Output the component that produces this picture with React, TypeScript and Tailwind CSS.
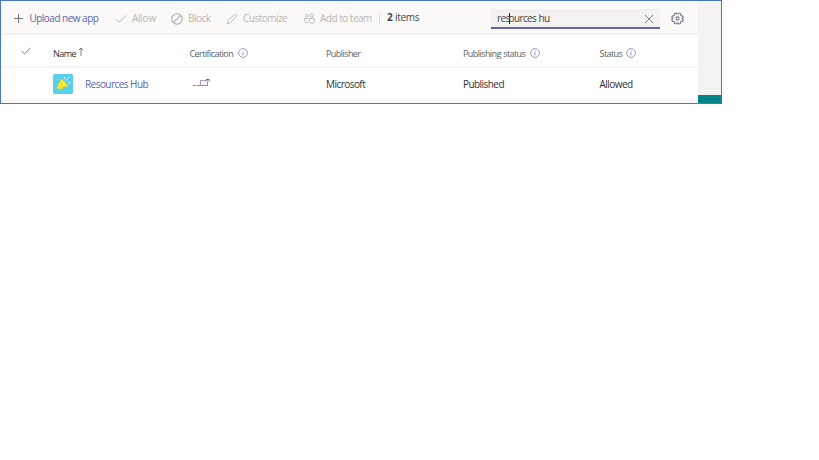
import type { ReactNode } from 'react';

function Check({ className }: { className: string }) {
  return (
    <svg viewBox="0 0 12 10" className={className} fill="none" stroke="currentColor" strokeWidth="1">
      <path d="M0.7 5.2 4 8.4 11.3 1.2" />
    </svg>
  );
}

function Info({ className = '' }: { className?: string }) {
  return (
    <svg viewBox="0 0 10 10" className={`mb-[2px] h-[10px] w-[10px] shrink-0 text-[#8d8fc4] ${className}`} fill="none" stroke="currentColor">
      <circle cx="5" cy="5" r="4.4" strokeWidth="0.9" />
      <path d="M5 4.4v3M5 2.6v0.9" strokeWidth="1" />
    </svg>
  );
}

function Action({ width, active, icon, label }: { width: string; active?: boolean; icon: ReactNode; label: ReactNode }) {
  return (
    <button className={`flex h-full shrink-0 items-center ${width} ${active ? 'text-[#6264a7]' : 'text-[#b8b6b4]'}`}>
      {icon}
      {label}
    </button>
  );
}

function Header({ width, info, children }: { width: string; info?: ReactNode; children: ReactNode }) {
  return (
    <div className={`flex shrink-0 items-center gap-[5px] text-[9px] tracking-[-0.56px] [word-spacing:0.5px] text-[#605e5c] ${width}`}>
      <span>{children}</span>
      {info}
    </div>
  );
}

export default function App() {
  return (
    <div className="h-[460px] w-[819px] overflow-hidden bg-white font-['Open_Sans','Noto_Sans',sans-serif] whitespace-nowrap">
      <div className="flex h-[104px] w-[722px] border border-[#4677b8] bg-white">
        <main className="w-[697px] shrink-0">
          <div className="flex h-[34px] items-center border-b-2 border-[#f0efed] bg-[#faf9f8] pt-[3px] pl-[13px] text-[10px] tracking-[-0.52px] [word-spacing:0.5px]">
            <Action
              width="w-[101px]"
              active
              icon={
                <svg viewBox="0 0 10 10" className="mr-[5.5px] h-[10px] w-[10px] text-[#77757d]" fill="none" stroke="currentColor" strokeWidth="1">
                  <path d="M4.5 0v9M0 4.5h9" />
                </svg>
              }
              label={<span>Upload new app</span>}
            />
            <Action width="w-[56px]" icon={<Check className="mr-[5px] h-[10px] w-[12px]" />} label={<span className="tracking-[-0.25px]">Allow</span>} />
            <Action
              width="w-[55px]"
              icon={
                <svg viewBox="0 0 12 12" className="mr-[5px] h-[12px] w-[12px] text-[#aaa8ab]" fill="none" stroke="currentColor" strokeWidth="1.1">
                  <circle cx="6" cy="6" r="5.2" />
                  <path d="M2.4 9.6 9.6 2.4" />
                </svg>
              }
              label={<span>Block</span>}
            />
            <Action
              width="w-[78px]"
              icon={
                <svg viewBox="0 0 12 12" className="mr-[5px] h-[12px] w-[12px]" fill="none" stroke="currentColor" strokeWidth="0.9" strokeLinejoin="round">
                  <path d="M1.2 10.8 2 7.8 8.4 1.4Q9.3.7 10.2 1.6 11.2 2.6 10.5 3.6L4.1 10Z" />
                </svg>
              }
              label={<span>Customize</span>}
            />
            <Action
              width="w-[75px]"
              icon={
                <svg viewBox="0 0 11 11" className="mr-[5px] h-[11px] w-[11px]" fill="none" stroke="currentColor" strokeWidth="0.9">
                  <circle cx="7.8" cy="2.4" r="1.8" />
                  <circle cx="2.8" cy="2.8" r="1.4" />
                  <path d="M5.3 5.5h5.1v2.4a2.55 2.55 0 0 1-5.1 0ZM4.2 5.5H.7v2a2.3 2.3 0 0 0 3.7 1.8" />
                </svg>
              }
              label={<span className="tracking-[-0.5px]">Add to team</span>}
            />
            <div className="mb-[2px] h-[10px] w-px bg-[#dddbd9]" />
            <div className="ml-[7px] pb-[3px] tracking-[-0.35px] text-[#484644]">
              <b>2</b> items
            </div>
            <div className="ml-auto flex h-[20px] w-[169px] items-center border-b-2 border-[#6264a7] bg-[#f3f2f1] pt-[2px] pr-[6px] pl-[6px] tracking-[-0.64px] text-[#484644]">
              <span>res</span>
              <i className="-mr-px -ml-px h-[11px] w-px bg-[#252423]" />
              <span>ources hu</span>
              <svg viewBox="0 0 10 10" className="ml-auto h-[10px] w-[10px]" fill="none" stroke="#777487" strokeWidth="0.9">
                <path d="M1 1 9 9M9 1 1 9" />
              </svg>
            </div>
            <svg viewBox="0 0 12 12" className="mr-[14px] ml-[11px] h-[13px] w-[13px]" fill="none" stroke="#777487" strokeWidth="0.95" strokeLinejoin="round">
              <path d="m4.8.8.5 1h1.4l.5-1 1.8.8-.3 1.1 1 1 1.1-.3.6 1.7-1 .5v1l1 .5-.7 1.6-1.1-.2-1 1 .3 1-1.7.7-.5-1H5.3l-.5 1-1.7-.7.3-1-1-1-1.1.2-.7-1.6 1-.5v-1l-1-.5.7-1.7 1.1.3 1-1L3.1 1.6Z" />
              <circle cx="6" cy="6" r="1.5" />
            </svg>
          </div>

          <div className="flex h-[33px] items-center border-b-2 border-[#f7f6f5] pt-[6px]">
            <div className="w-[52px] shrink-0 pb-[5px] pl-[20px] text-[#605e5c]">
              <Check className="h-[8px] w-[10px]" />
            </div>
            <Header width="w-[136.5px]">
              <span className="inline-flex items-center tracking-[-0.5px] text-[#323130]">
                Name
                <svg viewBox="0 0 6 10" className="mb-[3px] ml-[2px] h-[10px] w-[6px]" fill="none" stroke="#605e5c" strokeWidth="0.8">
                  <path d="M3 9V1M1 3 3 1 5 3" />
                </svg>
              </span>
            </Header>
            <Header width="w-[136.5px]" info={<Info />}>Certification</Header>
            <Header width="w-[137px]">Publisher</Header>
            <Header width="w-[136.5px]" info={<Info className="-ml-[0.5px]" />}>Publishing status</Header>
            <Header width="w-[90px]" info={<Info className="-ml-px" />}>Status</Header>
          </div>

          <div className="flex h-[33px] items-center border-b-2 border-[#f7f6f5] pt-px pl-[52px] text-[10px] tracking-[-0.55px] text-[#323130]">
            <svg viewBox="0 0 20 20" className="mr-[12px] h-[20px] w-[20px] shrink-0">
              <rect width="20" height="20" rx="1.5" fill="#5bd0ed" />
              <path d="M9 5.2 15.2 11.6 14.5 12.2 9.9 13.2Q10 15.5 8 15.4 6.8 15.3 6.3 14.3L4.6 15.2 3.6 13.9 7.7 5.8Z" fill="#f9e52a" />
              <g stroke="#e4fbff" strokeWidth="1">
                <path d="M11.5 3v2M13.2 6.6l1.3-2M15.5 8.5h1.8M15.7 3.2h1" />
              </g>
            </svg>
            <span className="w-[104px] shrink-0 text-[#6264a7]">Resources Hub</span>
            <span className="w-[137px] shrink-0 pb-[4px] pl-[3px]">
              <svg viewBox="0 0 18 9" className="h-[9px] w-[18px]" fill="none">
                <path d="M1 7.5h3M5 7.5h3" stroke="#8d82b5" />
                <path d="M8.5 2v5M8 2.5h6" stroke="#b395b6" />
                <path d="M8 7.5h8M15.5 3.5v4" stroke="#8295c0" />
                <path d="M14 3.5 16.5 1M14.2 1.5h3v2" stroke="#6264a7" />
              </svg>
            </span>
            <span className="w-[137px] shrink-0">Microsoft</span>
            <span className="w-[136.5px] shrink-0">Published</span>
            <span>Allowed</span>
          </div>
        </main>
        <aside className="flex flex-1 flex-col justify-end bg-[#f3f2f1]">
          <div className="h-[8px] bg-[#00848a]" />
        </aside>
      </div>
    </div>
  );
}
